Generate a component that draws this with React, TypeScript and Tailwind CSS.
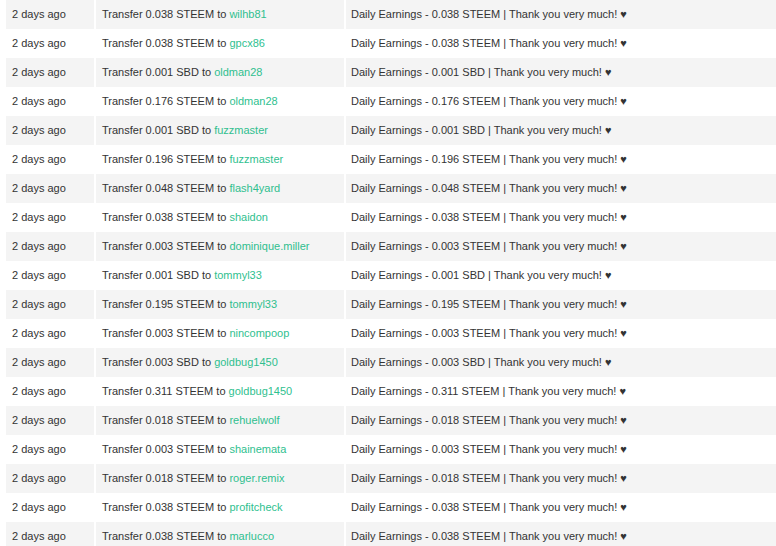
const rows: [string, string, string][] = [
["0.038","STEEM","wilhb81"],["0.038","STEEM","gpcx86"],["0.001","SBD","oldman28"],["0.176","STEEM","oldman28"],["0.001","SBD","fuzzmaster"],["0.196","STEEM","fuzzmaster"],["0.048","STEEM","flash4yard"],["0.038","STEEM","shaidon"],["0.003","STEEM","dominique.miller"],["0.001","SBD","tommyl33"],["0.195","STEEM","tommyl33"],["0.003","STEEM","nincompoop"],["0.003","SBD","goldbug1450"],["0.311","STEEM","goldbug1450"],["0.018","STEEM","rehuelwolf"],["0.003","STEEM","shainemata"],["0.018","STEEM","roger.remix"],["0.038","STEEM","profitcheck"],["0.038","STEEM","marlucco"]];
export default function App(){
  return (
    <div className="w-[776px] h-[546px] overflow-hidden bg-white pl-[6px] text-[11px] text-[#333]" style={{fontFamily:'"Liberation Sans", Arial, sans-serif'}}>
      {rows.map((r,i)=>(
        <div key={i} className={`flex h-[29px] items-center ${i%2===0?'bg-[#f4f4f4]':'bg-white'}`}>
          <div className="w-[88px] pl-[6px] h-full flex items-center">2 days ago</div>
          <div className="w-[250px] pl-[6px] h-full flex items-center border-l-2 border-white">Transfer {r[0]} {r[1]} to&nbsp;<span className="text-[#2fbf8f]">{r[2]}</span></div>
          <div className="flex-1 pl-[5px] h-full flex items-center border-l-2 border-white">Daily Earnings - {r[0]} {r[1]} | Thank you very much! ♥</div>
        </div>
      ))}
    </div>
  );
}
